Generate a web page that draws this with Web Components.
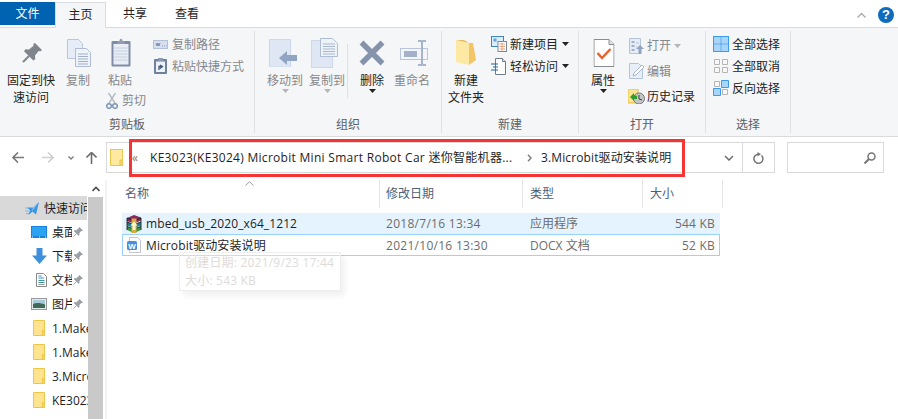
<!DOCTYPE html>
<html lang="zh">
<head>
<meta charset="utf-8">
<title>3.Microbit驱动安装说明</title>
<style>
  html, body { margin: 0; height: 100%; background: #fff; overflow: hidden; }
  body { font: 12px/17px "Open Sans", "Noto Sans CJK SC", sans-serif; color: #1e1e1e; }
</style>
</head>
<body>
<fx-window>
  <fx-tabs></fx-tabs>
  <fx-ribbon>
    <fx-group label="剪贴板" style="--w:254px;--pl:7px">
      <fx-big icon="pin" style="--w:48px;--ix:1px">固定到快<br>速访问</fx-big>
      <fx-big icon="copy" off style="--w:36px;--ix:1px;margin-left:5px">复制</fx-big>
      <div style="width:51px;margin-left:6px">
        <fx-big icon="clipboard" off style="--w:36px;--ix:.5px">粘贴</fx-big>
        <fx-small icon="scissors" off style="--ib:14px;--g:3px;margin:1px 0 0 3px">剪切</fx-small>
      </div>
      <fx-col>
        <fx-small icon="pathcopy" off>复制路径</fx-small>
        <fx-small icon="shortcut" off>粘贴快捷方式</fx-small>
      </fx-col>
    </fx-group>
    <fx-group label="组织" style="--w:186px;--pl:10px">
      <fx-big icon="moveto" off caret style="--w:40px;--ix:-2px">移动到</fx-big>
      <fx-big icon="copyto" off caret style="--w:40px;--ix:-3px;margin-left:2px">复制到</fx-big>
      <fx-vline></fx-vline>
      <fx-big icon="del" caret dark style="--w:40px;margin-left:4px">删除</fx-big>
      <fx-big icon="rename" off style="--w:40px;--ix:2px">重命名</fx-big>
    </fx-group>
    <fx-group label="新建" style="--w:136px;--pl:4px">
      <fx-big icon="folder" style="--w:40px">新建<br>文件夹</fx-big>
      <fx-col style="margin-left:5px">
        <fx-small icon="newitem" caret>新建项目</fx-small>
        <fx-small icon="easy" caret>轻松访问</fx-small>
      </fx-col>
    </fx-group>
    <fx-group label="打开" style="--w:126px;--pl:4px">
      <fx-big icon="props" caret dark style="--w:40px;--ix:.5px">属性</fx-big>
      <fx-col style="margin-left:6px;--rh:25.5px;--g:3px">
        <fx-small icon="open" off caret>打开</fx-small>
        <fx-small icon="edit" off>编辑</fx-small>
        <fx-small icon="history">历史记录</fx-small>
      </fx-col>
    </fx-group>
    <fx-group label="选择" style="--w:84px;--pl:7px">
      <fx-col style="--ib:16px;--g:3px">
        <fx-small icon="all">全部选择</fx-small>
        <fx-small icon="none">全部取消</fx-small>
        <fx-small icon="invert">反向选择</fx-small>
      </fx-col>
    </fx-group>
  </fx-ribbon>
  <fx-address></fx-address>
  <fx-main>
    <fx-nav slot="nav">
      <fx-nav-item icon="star" active>快速访问</fx-nav-item>
      <fx-nav-item icon="desktop" pinned>桌面</fx-nav-item>
      <fx-nav-item icon="download" pinned>下载</fx-nav-item>
      <fx-nav-item icon="docs" pinned>文档</fx-nav-item>
      <fx-nav-item icon="pics" pinned>图片</fx-nav-item>
      <fx-nav-item icon="navfolder">1.Makecode</fx-nav-item>
      <fx-nav-item icon="navfolder">1.Makecode</fx-nav-item>
      <fx-nav-item icon="navfolder">3.Microbit</fx-nav-item>
      <fx-nav-item icon="navfolder">KE3023</fx-nav-item>
    </fx-nav>
    <fx-files slot="files">
      <fx-file icon="rar" name="mbed_usb_2020_x64_1212" date="2018/7/16 13:34" type="应用程序" size="544 KB" hot></fx-file>
      <fx-file icon="docx" name="Microbit驱动安装说明" date="2021/10/16 13:30" type="DOCX 文档" size="52 KB" sel></fx-file>
    </fx-files>
  </fx-main>
</fx-window>

<script>
const ICONS = {
  pin: [20, 20, `<path d="M13 0l7 7-1.500 1.200-1.800-.2-3.700 4.500.3 3.500-2 1.500-9.300-9.300 1.500-2 3.500.3 4.500-3.700-.2-1.800z" fill="#80858b"/><path d="M7 13l-6 6" stroke="#80858b" stroke-width="2"/>`],
  copy: [24, 28, `<path d="M.5.5h11l4 4v15H.5z" fill="#e6edf7" stroke="#b9c7db"/><path d="M8.500 9.500h11l4 4v14h-15z" fill="#eef3fa" stroke="#aebdd3"/><path d="M11 15h10M11 17.500h10M11 20h10M11 22.500h10M11 25h10" stroke="#9fafc6"/>`],
  clipboard: [21, 29, `<rect x="1" y="3" width="19" height="25.500" rx="1" fill="#7f8da6"/><rect x="3" y="6" width="15" height="20.500" fill="#e8edf6"/><path d="M4 10h13M4 13h13M4 16h13M4 19h13M4 22h13" stroke="#c6d0e0"/><path d="M7 3h2c0-3 3-3 3 0h2v3H7z" fill="#909db3"/>`],
  pathcopy: [15, 9, `<rect x=".5" y=".5" width="14" height="8" fill="#d6dff0" stroke="#b3c0d6"/><path d="M3 3l1 3 1-3 1 3 1-3M9 6h.8M11 6h.8M13 6h.5" stroke="#6a7b95" fill="none" stroke-width=".8"/>`],
  shortcut: [13, 16, `<rect y="1" width="13" height="15" rx="1" fill="#6f819d"/><rect x="2" y="3.500" width="9" height="10.500" fill="#eef2f8"/><rect x="4" width="5" height="3" fill="#8b99b0"/><path d="M5 12V8.500h3M6 7l2.500 1.500L6 10.500" stroke="#46597a" stroke-width="1.300" fill="none"/>`],
  scissors: [12, 16, `<path d="M3 10L9.500 0M9 10L2.500 0" stroke="#b5bcc6" stroke-width="1.500"/><circle cx="3" cy="13" r="2.300" fill="none" stroke="#7f94b6" stroke-width="1.500"/><circle cx="9" cy="13" r="2.300" fill="none" stroke="#7f94b6" stroke-width="1.500"/>`],
  moveto: [28, 28, `<path d="M.5.500h21v27.500H.500z" fill="#dfe7f4" stroke="#ccd8e9"/><path d="M10 19l8-7v4h10v6H18v4z" fill="#90a5c3"/>`],
  copyto: [27, 30, `<path d="M.5 2.500h21v27H.500z" fill="#dfe7f4" stroke="#ccd8e9"/><path d="M9.500 .5h12l5 5v13h-17z" fill="#eef3fa" stroke="#aebdd3"/><path d="M12 6h12M12 8.500h12M12 11h12M12 13.500h12M12 16h12" stroke="#a8b7cc"/>`],
  del: [26, 26, `<path d="M2.500 2.500l21 21M23.500 2.500l-21 21" stroke="#8693ad" stroke-width="5.500"/>`],
  rename: [28, 26, `<rect x=".5" y="8.500" width="27" height="11" fill="#f3f5f9" stroke="#b8c5da"/><rect x="4" y="11" width="13" height="6" fill="#a3b2c9"/><path d="M18 1h3l1 1 1-1h3M22 2v22M18 25h3l1-1 1 1h3" stroke="#a7b5ca" stroke-width="2" fill="none"/>`],
  folder: [20, 25, `<path d="M0 0l13 3v22L0 22z" fill="#fde9a3"/><path d="M13 3h4l3 17-7 5z" fill="#f3c566"/><path d="M0 0h8l5 3z" fill="#e9bd5e"/>`],
  newitem: [16, 16, `<rect x=".5" y=".5" width="12" height="10" fill="#dcecf9" stroke="#3f86bb"/><rect x="2.500" y="2.500" width="3" height="3" fill="#5fa3d8"/><rect x="7" y="5.500" width="8.500" height="10" fill="#fff" stroke="#7b8797"/><path d="M8.500 8h5.500M8.500 10.500h5.500M8.500 13h5.500M11 6.500v8.500" stroke="#e6a480"/>`],
  easy: [15, 17, `<path d="M4.500.5h7l3 3v13h-10z" fill="#fff" stroke="#6f7b8a"/><path d="M11.500.5v3h3" fill="#eceff3" stroke="#6f7b8a"/><path d="M0 6h7M2 9h5M0 12h7" stroke="#24679f" stroke-width="1.200"/>`],
  props: [21, 28, `<path d="M.5.5h15l5 5v22H.500z" fill="#fff" stroke="#8a8d92"/><path d="M15.500.5v5h5" fill="#e3e3e3" stroke="#8a8d92"/><path d="M4 14l4.500 5L17 10" fill="none" stroke="#e8632c" stroke-width="2.500"/>`],
  open: [15, 16, `<path d="M.5.5h11v15H.5z" fill="#e6edf7" stroke="#b5c3d8"/><path d="M2.500 3h3v2h-3zM2.500 7h3v2h-3zM2.500 11h3v2h-3z" fill="#9fb0c8"/><path d="M7 5h3M7 9h1" stroke="#b5c3d8"/><path d="M11 7l4 4h-2.500v5h-3v-5H7z" fill="#8fa3bf"/>`],
  edit: [15, 16, `<path d="M.5.5h9l4 4v11H.500z" fill="#e9eff8" stroke="#b5c3d8"/><path d="M4 13l1-3 8-8 2 2-8 8z" fill="#fff" stroke="#a7b7cd"/>`],
  history: [17, 15, `<path d="M0 0h10v14H0z" fill="#fde58f" stroke="#e6bf3e"/><circle cx="11" cy="9.500" r="5.500" fill="#c3c5c7" stroke="#77797c"/><path d="M11 6v4l3 1" stroke="#3f4245" fill="none"/><path d="M2 8l4-4v2.500c2 0 3 .5 3 .5v3H6v2z" fill="#2f9e2c"/>`],
  all: [16, 16, `<rect x=".5" y=".5" width="15" height="15" fill="#a9d5fb" stroke="#3d9be9"/><path d="M8 0v16M0 8h16" stroke="#fff" stroke-width="1"/><path d="M.5 .5h15v15H.5zM.5 8h15M8 .5v15" fill="none" stroke="#3d9be9"/>`],
  none: [16, 16, `<path d="M1.500 1.500h5v5h-5zM9.500 1.500h5v5h-5zM1.500 9.500h5v5h-5zM9.500 9.500h5v5h-5z" fill="#f8f8f8" stroke="#b5b5b5"/>`],
  invert: [16, 16, `<path d="M1.500 1.500h5v5h-5zM9.500 9.500h5v5h-5z" fill="#f8f8f8" stroke="#b5b5b5"/><path d="M8.500 .5h7v7h-7zM.5 8.500h7v7h-7z" fill="#a9d5fb" stroke="#3d9be9"/>`],
  back: [12, 11, `<path d="M6 .5L1 5.500l5 5M1 5.500h11" fill="none" stroke="#7a7a7a" stroke-width="1.600"/>`],
  fwd: [12, 11, `<path d="M6 .5l5 5-5 5M11 5.500H0" fill="none" stroke="#cfcfcf" stroke-width="1.600"/>`],
  chev: [6, 4, `<path d="M.5.5L3 3l2.500-2.500" fill="none" stroke="#7a7a7a" stroke-width="1.300"/>`],
  up: [11, 12, `<path d="M.5 5.500l5-5 5 5M5.500 .5V12" fill="none" stroke="#6c6c6c" stroke-width="1.600"/>`],
  addrfolder: [13, 17, `<path d="M.5.5h12v16H.5z" fill="#fee9a0" stroke="#e9c44f"/><path d="M10 11h2.500v5.500H10z" fill="#f6d774" stroke="#e9c44f"/>`],
  crumbsep: [5, 8, `<path d="M1 .8L4 4 1 7.200" fill="none" stroke="#808080" stroke-width="1.500"/>`],
  dropdown: [10, 6, `<path d="M1 1l4 4 4-4" fill="none" stroke="#6d6d6d" stroke-width="1.500"/>`],
  refresh: [11, 12, `<path d="M8.500 3.500a4.500 4.500 0 1 1-3-1.200" fill="none" stroke="#767676" stroke-width="1.500"/><path d="M4.500 0l3.500 2.300-3.500 2.300z" fill="#767676"/>`],
  search: [12, 12, `<circle cx="7.500" cy="4.500" r="3.500" fill="none" stroke="#767676" stroke-width="1.500"/><path d="M5 7l-4.500 4.500" stroke="#767676" stroke-width="2"/>`],
  star: [14, 13, `<path d="M14 0l-3 12.500-3.500-3L3.500 13 5 8 2 5.500h6z" fill="#3a95e0"/><path d="M14 0L8 5.500l-1 4z" fill="#8cc6f3"/><path d="M0 6h3M0 9h4M1 11.500h3" stroke="#7ab8ea"/>`],
  desktop: [16, 12, `<rect width="16" height="12" fill="#1683dc"/><rect x="1" y="1" width="14" height="9" fill="#2ba3f2"/><path d="M1 11h1M8 11h1M14 11h1" stroke="#e5f4fe"/>`],
  download: [15, 16, `<path d="M4.500 0h6v7.500H15L7.500 16 0 7.500h4.500z" fill="#3f8fdc"/>`],
  docs: [11, 14, `<path d="M.5.5h7l3 3v10H.5z" fill="#fff" stroke="#8a8a8a"/><path d="M2.500 3h3M2.500 5h5.500" stroke="#2f95de"/><path d="M2.500 7.500h6M2.500 9.500h6" stroke="#3a9a9e"/><path d="M2.500 11.500h6" stroke="#9a9a9a"/>`],
  pics: [16, 12, `<rect x=".5" y=".5" width="15" height="11" fill="#dfe9ee" stroke="#9a9a9a"/><path d="M2 2h12v4H2z" fill="#a8cbdc"/><path d="M2 6c3-1.500 8-1 12 .5V10H2z" fill="#3e6a57"/>`],
  navfolder: [12, 16, `<path d="M.5.5h11v15H.5z" fill="#fee48e" stroke="#eec548"/><path d="M9.500 10.500h2v5h-2z" fill="#f6d774" stroke="#eec548"/>`],
  pinsmall: [10, 10, `<path d="M6.500 0L10 3.500l-1 .5-.8-.1-1.900 2.300.2 1.700-1 .8-4.700-4.700 1-1 1.700.2L5.800 1z" fill="#9aa0a6"/><path d="M3.500 6.500L.5 9.500" stroke="#9aa0a6"/>`],
  rar: [16, 18, `<path d="M1 3l7-3 7 2.500v3L8 8.500 1 6z" fill="#8a2a5c"/><path d="M1 7l7 2.500L15 7v3.500L8 13l-7-2.500z" fill="#1f7f8c"/><path d="M1 11.500L8 14l7-2.500V15l-7 3-7-3z" fill="#3c9a3c"/><path d="M1 3l7 2.500L15 3M1 7l7 2.500L15 7M1 11.500L8 14l7-2.500M1 3v12M15 3v12" fill="none" stroke="#1d2026" stroke-width=".9"/><path d="M5.500 3.500h5V18h-5z" fill="#d6ac48"/><path d="M8 6.500l3.500 4H9.500V15h-3v-4.500h-2z" fill="#fff6d0"/>`],
  docx: [14, 16, `<path d="M2.500.5h8l3 3v12h-11z" fill="#fff" stroke="#c0c5ce"/><rect y="4" width="10" height="9" rx="1.500" fill="#4c8de0"/><text x="5" y="11.500" text-anchor="middle" font-family="Liberation Sans, sans-serif" font-size="8" font-weight="700" fill="#fff">W</text>`]
}

class FxIcon extends HTMLElement {
  constructor() {
    super()
    const [w, h, body] = ICONS[this.getAttribute('name')]
    this.attachShadow({ mode: 'open' }).innerHTML = `
      <style>:host { display: inline-flex; flex: none; } svg { display: block; }</style>
      <svg width="${w}" height="${h}" viewBox="0 0 ${w} ${h}">${body}</svg>`
  }
}

class FxWindow extends HTMLElement {
  constructor() {
    super()
    this.attachShadow({ mode: 'open' }).innerHTML = `
      <style>:host { display: flex; flex-direction: column; height: 419px; position: relative; overflow: hidden; }</style>
      <slot></slot>`
  }
}

class FxTabs extends HTMLElement {
  constructor() {
    super()
    this.attachShadow({ mode: 'open' }).innerHTML = `
      <style>
        :host { display: flex; align-items: flex-start; height: 28px; padding-top: 2px; box-sizing: border-box; border-bottom: 1px solid #dadbdc; position: relative; }
        div { text-align: center; color: #222; height: 23px; line-height: 24px; }
        .file { width: 55px; background: #0063b1; color: #fff; }
        .home { background: #f5f6f7; border: 1px solid #dadbdc; border-bottom: 0; box-sizing: border-box; width: 51px; height: 26px; }
        .share { width: 56px; margin-left: 1px; }
        .view { width: 50px; margin-left: -1px; }
        .tools { margin-left: auto; display: flex; align-items: center; gap: 12px; height: 26px; padding-right: 4px; }
        .chev { width: 9px; height: 6px; }
        .help { width: 16px; height: 16px; border-radius: 50%; background: #0f6cbd; color: #fff; font: 700 13px/16px "Liberation Sans", sans-serif; text-align: center; }
      </style>
      <div class="file">文件</div>
      <div class="home">主页</div>
      <div class="share">共享</div>
      <div class="view">查看</div>
      <span class="tools">
        <svg class="chev" viewBox="0 0 9 6"><path d="M.5 5.500L4.500 1.500l4 4" fill="none" stroke="#a9a9a9" stroke-width="1.300"/></svg>
        <span class="help">?</span>
      </span>`
  }
}

class FxRibbon extends HTMLElement {
  constructor() {
    super()
    this.attachShadow({ mode: 'open' }).innerHTML = `
      <style>
        :host { display: flex; height: 109px; padding: 3px 0 3px; box-sizing: border-box; background: #f5f6f7; border-bottom: 1px solid #dadbdc; }
      </style>
      <slot></slot>`
  }
}

class FxGroup extends HTMLElement {
  constructor() {
    super()
    this.attachShadow({ mode: 'open' }).innerHTML = `
      <style>
        :host { display: flex; flex-direction: column; flex: none; width: var(--w); border-right: 1px solid #e1e2e4; }
        .items { display: flex; align-items: flex-start; padding: 3px 0 0 var(--pl); flex: 1; white-space: nowrap; }
        .label { text-align: center; color: #5c6066; height: 17px; }
      </style>
      <div class="items"><slot></slot></div>
      <div class="label">${this.getAttribute('label')}</div>`
  }
}

const caret = color => `<svg width="7" height="4" viewBox="0 0 7 4"><path d="M0 0h7L3.500 4z" fill="${color}"/></svg>`

class FxBig extends HTMLElement {
  constructor() {
    super()
    const off = this.hasAttribute('off')
    this.attachShadow({ mode: 'open' }).innerHTML = `
      <style>
        :host { display: flex; flex-direction: column; align-items: center; flex: none; width: var(--w); color: ${off ? '#85888c' : '#222'}; text-align: center; }
        .icon { height: 37px; display: flex; align-items: center; transform: translateX(var(--ix, 0)); }
        .label { margin-top: .5px; }
        .caret { display: block; line-height: 0; }
      </style>
      <span class="icon"><fx-icon name="${this.getAttribute('icon')}"></fx-icon></span>
      <span class="label"><slot></slot></span>
      ${this.hasAttribute('caret') ? `<span class="caret">${caret(off ? '#b3b6ba' : '#222')}</span>` : ''}`
  }
}

class FxCol extends HTMLElement {
  constructor() {
    super()
    this.attachShadow({ mode: 'open' }).innerHTML = `
      <style>:host { display: flex; flex-direction: column; margin-top: -1px; }</style>
      <slot></slot>`
  }
}

class FxSmall extends HTMLElement {
  constructor() {
    super()
    const off = this.hasAttribute('off')
    this.attachShadow({ mode: 'open' }).innerHTML = `
      <style>
        :host { display: flex; align-items: center; height: var(--rh, 22px); gap: var(--g, 4px); color: ${off ? '#85888c' : '#222'}; white-space: nowrap; }
        .icon { display: flex; justify-content: center; width: var(--ib, 15px); }
        .caret { display: flex; }
      </style>
      <span class="icon"><fx-icon name="${this.getAttribute('icon')}"></fx-icon></span>
      <span><slot></slot></span>
      ${this.hasAttribute('caret') ? `<span class="caret">${caret(off ? '#b3b6ba' : '#222')}</span>` : ''}`
  }
}

class FxVline extends HTMLElement {
  constructor() {
    super()
    this.attachShadow({ mode: 'open' }).innerHTML = `
      <style>:host { display: block; flex: none; width: 1px; height: 54px; margin-top: 10px; background: #dfe0e2; }</style>`
  }
}

class FxAddress extends HTMLElement {
  constructor() {
    super()
    this.attachShadow({ mode: 'open' }).innerHTML = `
      <style>
        :host { display: flex; align-items: flex-start; height: 43px; padding: 5px 0 0 12px; box-sizing: border-box; position: relative; }
        .navs { display: flex; align-items: center; height: 31px; }
        .box { display: flex; align-items: center; height: 31px; box-sizing: border-box; border: 1px solid #d9d9d9; }
        .path { width: 669px; margin-left: 9px; padding-left: 3px; }
        .crumbs { display: flex; align-items: center; flex: 1; white-space: nowrap; }
        .dbl { width: 18px; margin-left: 9px; color: #777; }
        .c1 { width: 377px; letter-spacing: .29px; }
        .c2 { letter-spacing: .12px; margin-left: 9px; }
        .cell { display: flex; align-items: center; justify-content: center; align-self: stretch; }
        .drop { width: 27px; }
        .ref { width: 31px; border-left: 1px solid #d9d9d9; }
        .search { width: 97px; margin-left: 12px; justify-content: flex-end; padding-right: 7px; }
        .mark { position: absolute; left: 129px; top: 2px; width: 556px; height: 38px; box-sizing: border-box; border: 3px solid #f73434; pointer-events: none; }
      </style>
      <span class="navs">
        <fx-icon name="back"></fx-icon>
        <fx-icon name="fwd" style="margin-left:18px"></fx-icon>
        <fx-icon name="chev" style="margin-left:14px"></fx-icon>
        <fx-icon name="up" style="margin-left:12px"></fx-icon>
      </span>
      <div class="box path">
        <fx-icon name="addrfolder"></fx-icon>
        <span class="crumbs">
          <span class="dbl">«</span>
          <span class="c1">KE3023(KE3024) Microbit Mini Smart Robot Car 迷你智能机器...</span>
          <fx-icon name="crumbsep"></fx-icon>
          <span class="c2">3.Microbit驱动安装说明</span>
        </span>
        <span class="cell drop"><fx-icon name="dropdown"></fx-icon></span>
        <span class="cell ref"><fx-icon name="refresh"></fx-icon></span>
      </div>
      <div class="box search"><fx-icon name="search"></fx-icon></div>
      <div class="mark"></div>`
  }
}

class FxMain extends HTMLElement {
  constructor() {
    super()
    this.attachShadow({ mode: 'open' }).innerHTML = `
      <style>:host { display: flex; flex: 1; min-height: 0; }</style>
      <slot name="nav"></slot><slot name="files"></slot>`
  }
}

class FxNav extends HTMLElement {
  constructor() {
    super()
    this.attachShadow({ mode: 'open' }).innerHTML = `
      <style>
        :host { display: flex; flex: none; width: 107px; box-sizing: border-box; border-right: 2px solid #f2f2f2; padding-right: 2px; }
        .list { width: 88px; padding-top: 16px; overflow: hidden; }
        .bar { width: 15px; display: flex; flex-direction: column; }
        .arrow { height: 17px; display: flex; align-items: center; justify-content: center; background: #fff; }
        .thumb { flex: 1; background: #c9c9c9; }
      </style>
      <div class="list"><slot></slot></div>
      <div class="bar">
        <span class="arrow"><svg width="8" height="6" viewBox="0 0 8 6"><path d="M.5 5L4 1.500 7.500 5" fill="none" stroke="#505050" stroke-width="1.700"/></svg></span>
        <span class="thumb"></span>
      </div>`
  }
}

class FxNavItem extends HTMLElement {
  constructor() {
    super()
    const icon = this.getAttribute('icon')
    const pinned = this.hasAttribute('pinned')
    this.attachShadow({ mode: 'open' }).innerHTML = `
      <style>
        :host { display: flex; align-items: center; height: 24px; white-space: nowrap; overflow: hidden; ${this.hasAttribute('active') ? 'background: #d9d9d9; width: 87px;' : ''} }
        .icon { display: flex; justify-content: flex-end; width: ${icon === 'star' ? 39 : icon === 'navfolder' ? 45 : 47}px; flex: none; }
        .text { margin-left: ${icon === 'navfolder' ? 7 : 5}px; overflow: hidden; ${pinned ? 'width: 20px; flex: none;' : ''} }
        .pin { margin-left: 1px; }
      </style>
      <span class="icon"><fx-icon name="${icon}"></fx-icon></span>
      <span class="text"><slot></slot></span>
      ${pinned ? '<fx-icon class="pin" name="pinsmall"></fx-icon>' : ''}`
  }
}

class FxFiles extends HTMLElement {
  constructor() {
    super()
    this.attachShadow({ mode: 'open' }).innerHTML = `
      <style>
        :host { display: block; flex: 1; padding-left: 15px; position: relative; }
        .head { display: grid; grid-template-columns: 258px 143px 120px 80px; height: 27px; margin-bottom: 6px; color: #4c607a; position: relative; }
        .head span { padding-left: 6px; line-height: 28px; border-right: 1px solid #e5e5e5; box-sizing: border-box; }
        .head span:first-child { padding-left: 3px; }
        .head span:nth-child(n+3) { padding-left: 7px; }
        .sort { position: absolute; left: 123px; top: 1px; }
        .ghost { position: absolute; left: 72px; top: 72px; width: 162px; height: 39px; box-sizing: border-box; padding: 1px 0 0 5px; border: 1px solid #eeeeee; box-shadow: 4px 5px 6px rgba(0,0,0,.06); color: #dedbd8; line-height: 18px; letter-spacing: .2px; white-space: nowrap; background: rgba(255,255,255,.35); }
      </style>
      <div class="head">
        <span>名称</span><span>修改日期</span><span>类型</span><span>大小</span>
        <svg class="sort" width="9" height="5" viewBox="0 0 9 5"><path d="M.5 4.500L4.500.8l4 3.700" fill="none" stroke="#9a9a9a"/></svg>
      </div>
      <slot></slot>
      <div class="ghost">创建日期: 2021/9/23 17:44<br>大小: 543 KB</div>`
  }
}

class FxFile extends HTMLElement {
  constructor() {
    super()
    const attr = name => this.getAttribute(name)
    const hot = this.hasAttribute('hot')
    const sel = this.hasAttribute('sel')
    this.attachShadow({ mode: 'open' }).innerHTML = `
      <style>
        :host { display: grid; grid-template-columns: 258px 143px 120px 77px; align-items: center; width: 598px; box-sizing: border-box; height: ${sel ? 22 : 21}px; background: ${hot ? '#e5f3ff' : '#fff'}; ${sel ? 'outline: 1px solid #99d1ff; outline-offset: -1px;' : ''} color: #6d6d6d; white-space: nowrap; }
        .name { display: flex; align-items: center; gap: 4px; padding-left: 4px; color: #1e1e1e; letter-spacing: .1px; }
        .icon { display: flex; width: 16px; justify-content: center; }
        .cell { padding-left: 6px; letter-spacing: .28px; }
        .type { padding-left: 7px; letter-spacing: 0; }
        .size { text-align: right; padding-right: 5px; letter-spacing: .2px; }
      </style>
      <span class="name"><span class="icon"><fx-icon name="${attr('icon')}"></fx-icon></span>${attr('name')}</span>
      <span class="cell">${attr('date')}</span>
      <span class="cell type">${attr('type')}</span>
      <span class="size">${attr('size')}</span>`
  }
}

window.customElements.define('fx-icon', FxIcon)
window.customElements.define('fx-window', FxWindow)
window.customElements.define('fx-tabs', FxTabs)
window.customElements.define('fx-ribbon', FxRibbon)
window.customElements.define('fx-group', FxGroup)
window.customElements.define('fx-big', FxBig)
window.customElements.define('fx-col', FxCol)
window.customElements.define('fx-small', FxSmall)
window.customElements.define('fx-vline', FxVline)
window.customElements.define('fx-address', FxAddress)
window.customElements.define('fx-main', FxMain)
window.customElements.define('fx-nav', FxNav)
window.customElements.define('fx-nav-item', FxNavItem)
window.customElements.define('fx-files', FxFiles)
window.customElements.define('fx-file', FxFile)
</script>
</body>
</html>
